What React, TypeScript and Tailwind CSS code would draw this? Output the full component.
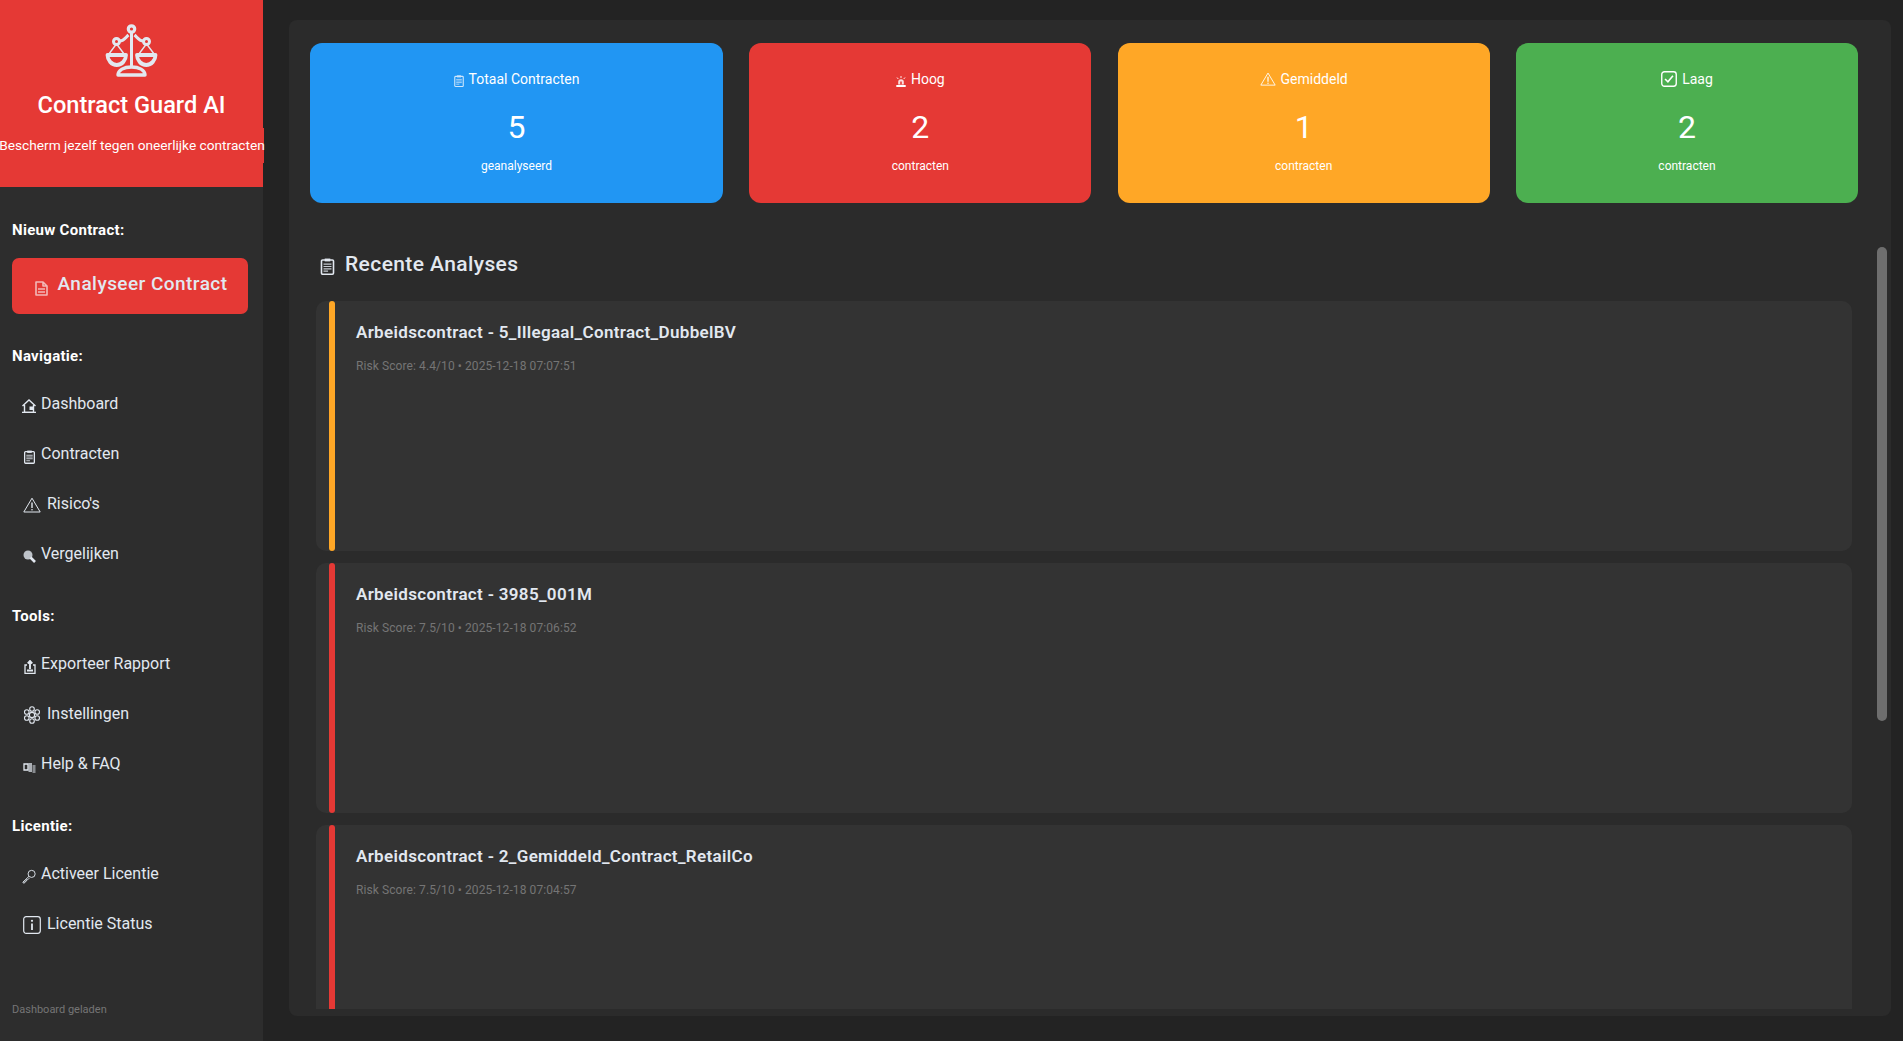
import React from "react";

// --- small monochrome glyphs, drawn to match the app's emoji font ---
type IconProps = { className?: string };

const ScalesIcon = ({ className }: IconProps) => (
  <svg viewBox="0 0 53 53" className={className} fill="none" stroke="currentColor" strokeWidth="3">
    <circle cx="26.5" cy="5" r="3.2" strokeWidth="3.2" />
    <circle cx="11.500" cy="17.500" r="3" strokeWidth="3" />
    <circle cx="41.500" cy="17.500" r="3" strokeWidth="3" />
    <path d="M26.500 8v35M14.500 17c5 0 6-3.500 9-6M38.500 17c-5 0-6-3.500-9-6" />
    <path d="M2.500 31h18.500c0 5-4 10-9.250 10S2.500 36 2.500 31zM32 31h18.500c0 5-4 10-9.250 10S32 36 32 31z" strokeWidth="3.800" strokeLinejoin="round" />
    <path d="M11 20.500 3.500 30.500M12 20.500l7.500 10M41 20.500l-7.500 10M42 20.500l7.500 10" strokeWidth="1.400" />
    <path d="M13 51c0-5 6-8 13.500-8S40 46 40 51z" strokeWidth="3.400" strokeLinejoin="round" />
  </svg>
);

const DocIcon = ({ className }: IconProps) => (
  <svg viewBox="0 0 13 15" className={className} fill="none" stroke="currentColor" strokeWidth="1.600">
    <path d="M1 1h7l4 4v9H1zM8 1v4h4" strokeLinejoin="round" />
    <path d="M3 8h7M3 11h7" />
  </svg>
);

const ClipboardIcon = ({ className }: IconProps) => (
  <svg viewBox="0 0 12 15" className={className}>
    <rect x="0.700" y="1.700" width="10.600" height="12.600" rx="1" fill="none" stroke="currentColor" strokeWidth="1.400" />
    <rect x="3.500" y="0.500" width="5" height="2.500" fill="currentColor" />
    <path d="M2.500 5.500h7M2.500 7.500h7M2.500 9.500h7M2.500 11.500h4" stroke="currentColor" strokeWidth="1.100" opacity="0.850" />
  </svg>
);

const HomeIcon = ({ className }: IconProps) => (
  <svg viewBox="0 0 14 14" className={className} fill="none" stroke="currentColor" strokeWidth="1.400">
    <path d="M0.500 7 7 1l6.500 6M2.500 6v7.400h9V6" />
    <path d="M7.500 7.500h3.500v3.500H7.500z" fill="currentColor" stroke="none" />
    <path d="M0 13.400h14" />
  </svg>
);

const WarningIcon = ({ className }: IconProps) => (
  <svg viewBox="0 0 18 16" className={className} fill="none" stroke="currentColor">
    <path d="M9 1.200 17.200 15H0.800z" strokeLinejoin="round" />
    <path d="M9 5.500V11" strokeWidth="1.400" />
    <circle cx="9" cy="12.800" r="0.800" fill="currentColor" stroke="none" />
  </svg>
);

const SearchIcon = ({ className }: IconProps) => (
  <svg viewBox="0 0 13 13" className={className}>
    <circle cx="5" cy="5" r="4.500" fill="currentColor" opacity="0.800" />
    <path d="M7.500 7.500 12 12" stroke="currentColor" strokeWidth="2.600" />
  </svg>
);

const ExportIcon = ({ className }: IconProps) => (
  <svg viewBox="0 0 12 14" className={className} fill="none" stroke="currentColor" strokeWidth="1.300">
    <path d="M3 5H1v8.300h10V5H9" />
    <path d="M6 9V1M3.800 3.500 6 1l2.200 2.500" strokeWidth="1.900" />
    <path d="M3 9.500h6v2H3z" fill="currentColor" stroke="none" />
  </svg>
);

const GearIcon = ({ className }: IconProps) => (
  <svg viewBox="0 0 18 18" className={className} fill="none" stroke="currentColor" strokeWidth="1.100">
    <circle cx="9" cy="9" r="2.600" />
    <circle cx="9" cy="3" r="2.300" />
    <circle cx="9" cy="15" r="2.300" />
    <circle cx="3.800" cy="6" r="2.300" />
    <circle cx="14.200" cy="6" r="2.300" />
    <circle cx="3.800" cy="12" r="2.300" />
    <circle cx="14.200" cy="12" r="2.300" />
  </svg>
);

const BooksIcon = ({ className }: IconProps) => (
  <svg viewBox="0 0 13 12" className={className} fill="none" stroke="currentColor">
    <path d="M1 2.500h4v6H1z" strokeWidth="1.300" />
    <path d="M5.500 1.500h3.500v9H5.500z" fill="currentColor" opacity="0.700" stroke="none" />
    <path d="M9.500 3.500h3v8h-3z" fill="currentColor" opacity="0.500" stroke="none" />
  </svg>
);

const KeyIcon = ({ className }: IconProps) => (
  <svg viewBox="0 0 15 15" className={className} fill="none" stroke="currentColor">
    <circle cx="10.300" cy="4.700" r="3.800" />
    <path d="M7.500 7.300 1 13.500l0.300 1 1.800-0.300 0-1.500 1.500-0.200 0-1.500 1.500 0 1.800-1.800" strokeLinejoin="round" />
  </svg>
);

const InfoIcon = ({ className }: IconProps) => (
  <svg viewBox="0 0 18 18" className={className} fill="none" stroke="currentColor">
    <rect x="0.700" y="0.700" width="16.600" height="16.600" rx="2.500" strokeWidth="1.200" />
    <path d="M9 7.500v6.500" strokeWidth="1.800" />
    <circle cx="9" cy="4.800" r="1.100" fill="currentColor" stroke="none" />
  </svg>
);

const SirenIcon = ({ className }: IconProps) => (
  <svg viewBox="0 0 10 11" className={className}>
    <path d="M2.200 8.500V6a2.800 2.800 0 0 1 5.600 0v2.500z" fill="#fbdede" />
    <path d="M4.200 8.500V5.500h1.600v3z" fill="#e53935" />
    <path d="M0.300 9h9.400v2H0.300z" fill="#ffffff" />
    <path d="M5 0v2M1 1.500l1.300 1.500M9 1.500 7.700 3" stroke="#ffffff" strokeWidth="0.900" />
  </svg>
);

const CheckBoxIcon = ({ className }: IconProps) => (
  <svg viewBox="0 0 15 15" className={className} fill="none" stroke="currentColor">
    <rect x="0.700" y="0.700" width="13.600" height="13.600" rx="2.500" strokeWidth="1.300" />
    <path d="M3.800 7.500 6.500 10.200 11.200 4.500" strokeWidth="1.500" />
  </svg>
);

// --- DATA ---
const stats = [
  { title: "Totaal Contracten", value: "5", sub: "geanalyseerd", bg: "bg-[#2196f3]", width: "w-[413px]", icon: <ClipboardIcon className="w-[10px] h-[12px] mt-[3px] text-[#cfe6fb]" /> },
  { title: "Hoog", value: "2", sub: "contracten", bg: "bg-[#e53935]", width: "w-[342px]", icon: <SirenIcon className="w-[10px] h-[11px] mt-[4px]" /> },
  { title: "Gemiddeld", value: "1", sub: "contracten", bg: "bg-[#ffa726]", width: "w-[372px]", icon: <WarningIcon className="w-[16px] h-[14px]" /> },
  { title: "Laag", value: "2", sub: "contracten", bg: "bg-[#4caf50]", width: "w-[342px]", icon: <CheckBoxIcon className="w-[16px] h-[16px]" /> },
];

const analyses = [
  { name: "Arbeidscontract - 5_Illegaal_Contract_DubbelBV", meta: "Risk Score: 4.4/10 • 2025-12-18 07:07:51", accent: "bg-[#ffa726]" },
  { name: "Arbeidscontract - 3985_001M", meta: "Risk Score: 7.5/10 • 2025-12-18 07:06:52", accent: "bg-[#e53935]" },
  { name: "Arbeidscontract - 2_Gemiddeld_Contract_RetailCo", meta: "Risk Score: 7.5/10 • 2025-12-18 07:04:57", accent: "bg-[#e53935]" },
];

const navSections = [
  {
    label: "Navigatie:",
    items: [
      { text: "Dashboard", icon: <HomeIcon className="w-[14px] h-[14px] mt-[4px]" /> },
      { text: "Contracten", icon: <ClipboardIcon className="w-[11px] h-[14px] mt-[6px] ml-[2px] mr-[1px]" /> },
      { text: "Risico's", icon: <WarningIcon className="w-[18px] h-[16px] mt-[2px] ml-[1px] mr-[1px]" /> },
      { text: "Vergelijken", icon: <SearchIcon className="w-[13px] h-[13px] mt-[5px] ml-[1px]" /> },
    ],
  },
  {
    label: "Tools:",
    items: [
      { text: "Exporteer Rapport", icon: <ExportIcon className="w-[12px] h-[14px] mt-[5px] ml-[2px]" /> },
      { text: "Instellingen", icon: <GearIcon className="w-[18px] h-[18px] mt-[1px] ml-[1px] mr-[1px]" /> },
      { text: "Help & FAQ", icon: <BooksIcon className="w-[13px] h-[13px] mt-[6px] ml-[1px]" /> },
    ],
  },
  {
    label: "Licentie:",
    items: [
      { text: "Activeer Licentie", icon: <KeyIcon className="w-[14px] h-[15px] mt-[5px]" /> },
      { text: "Licentie Status", icon: <InfoIcon className="w-[18px] h-[18px] mt-[1px] ml-[1px] mr-[1px]" /> },
    ],
  },
];

const Sidebar = () => (
  <aside className="relative w-[263px] h-full shrink-0 bg-[#2d2d2d] flex flex-col">
    {/* HEADER */}
    <div className="h-[187px] shrink-0 bg-[#e53935] flex flex-col items-center pt-[24px]">
      <ScalesIcon className="w-[53px] h-[53px] text-[#e2e8f0]" />
      <h1 className="mt-[14px] text-[23.6px] leading-[28px] font-medium text-white whitespace-nowrap">Contract Guard AI</h1>
      <div className="mt-[9px] w-[264px] h-[35px] self-start bg-[#e53935] flex items-center justify-center text-[13.7px] text-white whitespace-nowrap">
        Bescherm jezelf tegen oneerlijke contracten
      </div>
    </div>

    {/* NEW CONTRACT */}
    <div className="px-[12px] pt-[33px]">
      <div className="text-[15px] leading-[20px] font-bold tracking-[0.3px] text-white">Nieuw Contract:</div>
      <button className="mt-[18px] w-[236px] h-[56px] pl-[3px] pb-[3px] rounded-[7px] bg-[#e53935] flex items-center justify-center gap-[9px] text-[19px] font-medium tracking-[0.45px] text-[#e2e8f0]">
        <DocIcon className="w-[13px] h-[15px] mt-[7px] text-[#f2b8b8]" />
        Analyseer Contract
      </button>
    </div>

    {/* NAV */}
    <nav className="flex flex-col gap-[28px] px-[12px] pt-[32px]">
      {navSections.map((section) => (
        <div key={section.label}>
          <div className="text-[15px] leading-[20px] font-bold tracking-[0.3px] text-white">{section.label}</div>
          <ul className="mt-[12px]">
            {section.items.map((item) => (
              <li key={item.text} className="h-[50px] pl-[10px] pt-[2px] flex items-center gap-[5px] text-[16px] text-[#e2e8f0]">
                {item.icon}
                {item.text}
              </li>
            ))}
          </ul>
        </div>
      ))}
    </nav>

    <div className="mt-auto mb-[23px] px-[12px] text-[11px] leading-[16px] text-[#757575]">Dashboard geladen</div>
  </aside>
);

const App = () => {
  return (
    <div
      className="w-full h-screen overflow-hidden flex bg-[#232323]"
      style={{ fontFamily: "Roboto, 'Liberation Sans', sans-serif" }}
    >
      <Sidebar />

      {/* MAIN PANEL */}
      <main className="relative flex-1 min-w-0 ml-[26px] mr-[12px] mt-[20px] mb-[25px] rounded-[8px] bg-[#2b2b2b] flex flex-col overflow-hidden">
        {/* STAT CARDS */}
        <div className="flex justify-between pl-[21px] pr-[33px] pt-[23px]">
          {stats.map((stat) => (
            <div key={stat.title} className={`${stat.width} ${stat.bg} h-[160px] rounded-[12px] flex flex-col items-center text-white pt-[26px]`}>
              <div className="flex items-center gap-[5px] text-[14px] leading-[20px]">
                {stat.icon}
                {stat.title}
              </div>
              <div className="mt-[19px] text-[32px] leading-[38px]">{stat.value}</div>
              <div className="mt-[12px] text-[12px] leading-[16px]">{stat.sub}</div>
            </div>
          ))}
        </div>

        {/* RECENT */}
        <h2 className="mt-[49px] ml-[31px] flex items-center gap-[10px] text-[21px] leading-[24px] font-medium tracking-[0.4px] text-[#e2e8f0]">
          <ClipboardIcon className="w-[15px] h-[17px] mt-[5px]" />
          Recente Analyses
        </h2>

        <div className="mt-[25px] ml-[27px] mr-[39px] mb-[7px] flex-1 min-h-0 overflow-hidden flex flex-col gap-[12px]">
          {analyses.map((item) => (
            <div key={item.name} className="h-[250px] shrink-0 rounded-[10px] bg-[#333333] pl-[13px] flex">
              <div className={`w-[6px] rounded-[3px] ${item.accent}`} />
              <div className="pl-[21px] pt-[21px]">
                <div className="text-[17px] leading-[20px] font-semibold tracking-[0.33px] text-[#e2e8f0]">{item.name}</div>
                <div className="mt-[16px] text-[12px] leading-[16px] tracking-[0.09px] text-[#757575]">{item.meta}</div>
              </div>
            </div>
          ))}
        </div>

        {/* SCROLLBAR */}
        <div className="absolute left-[1588px] top-[227px] w-[10px] h-[474px] rounded-[5px] bg-[#6e6e6e]" />
      </main>
    </div>
  );
};

export default App;
